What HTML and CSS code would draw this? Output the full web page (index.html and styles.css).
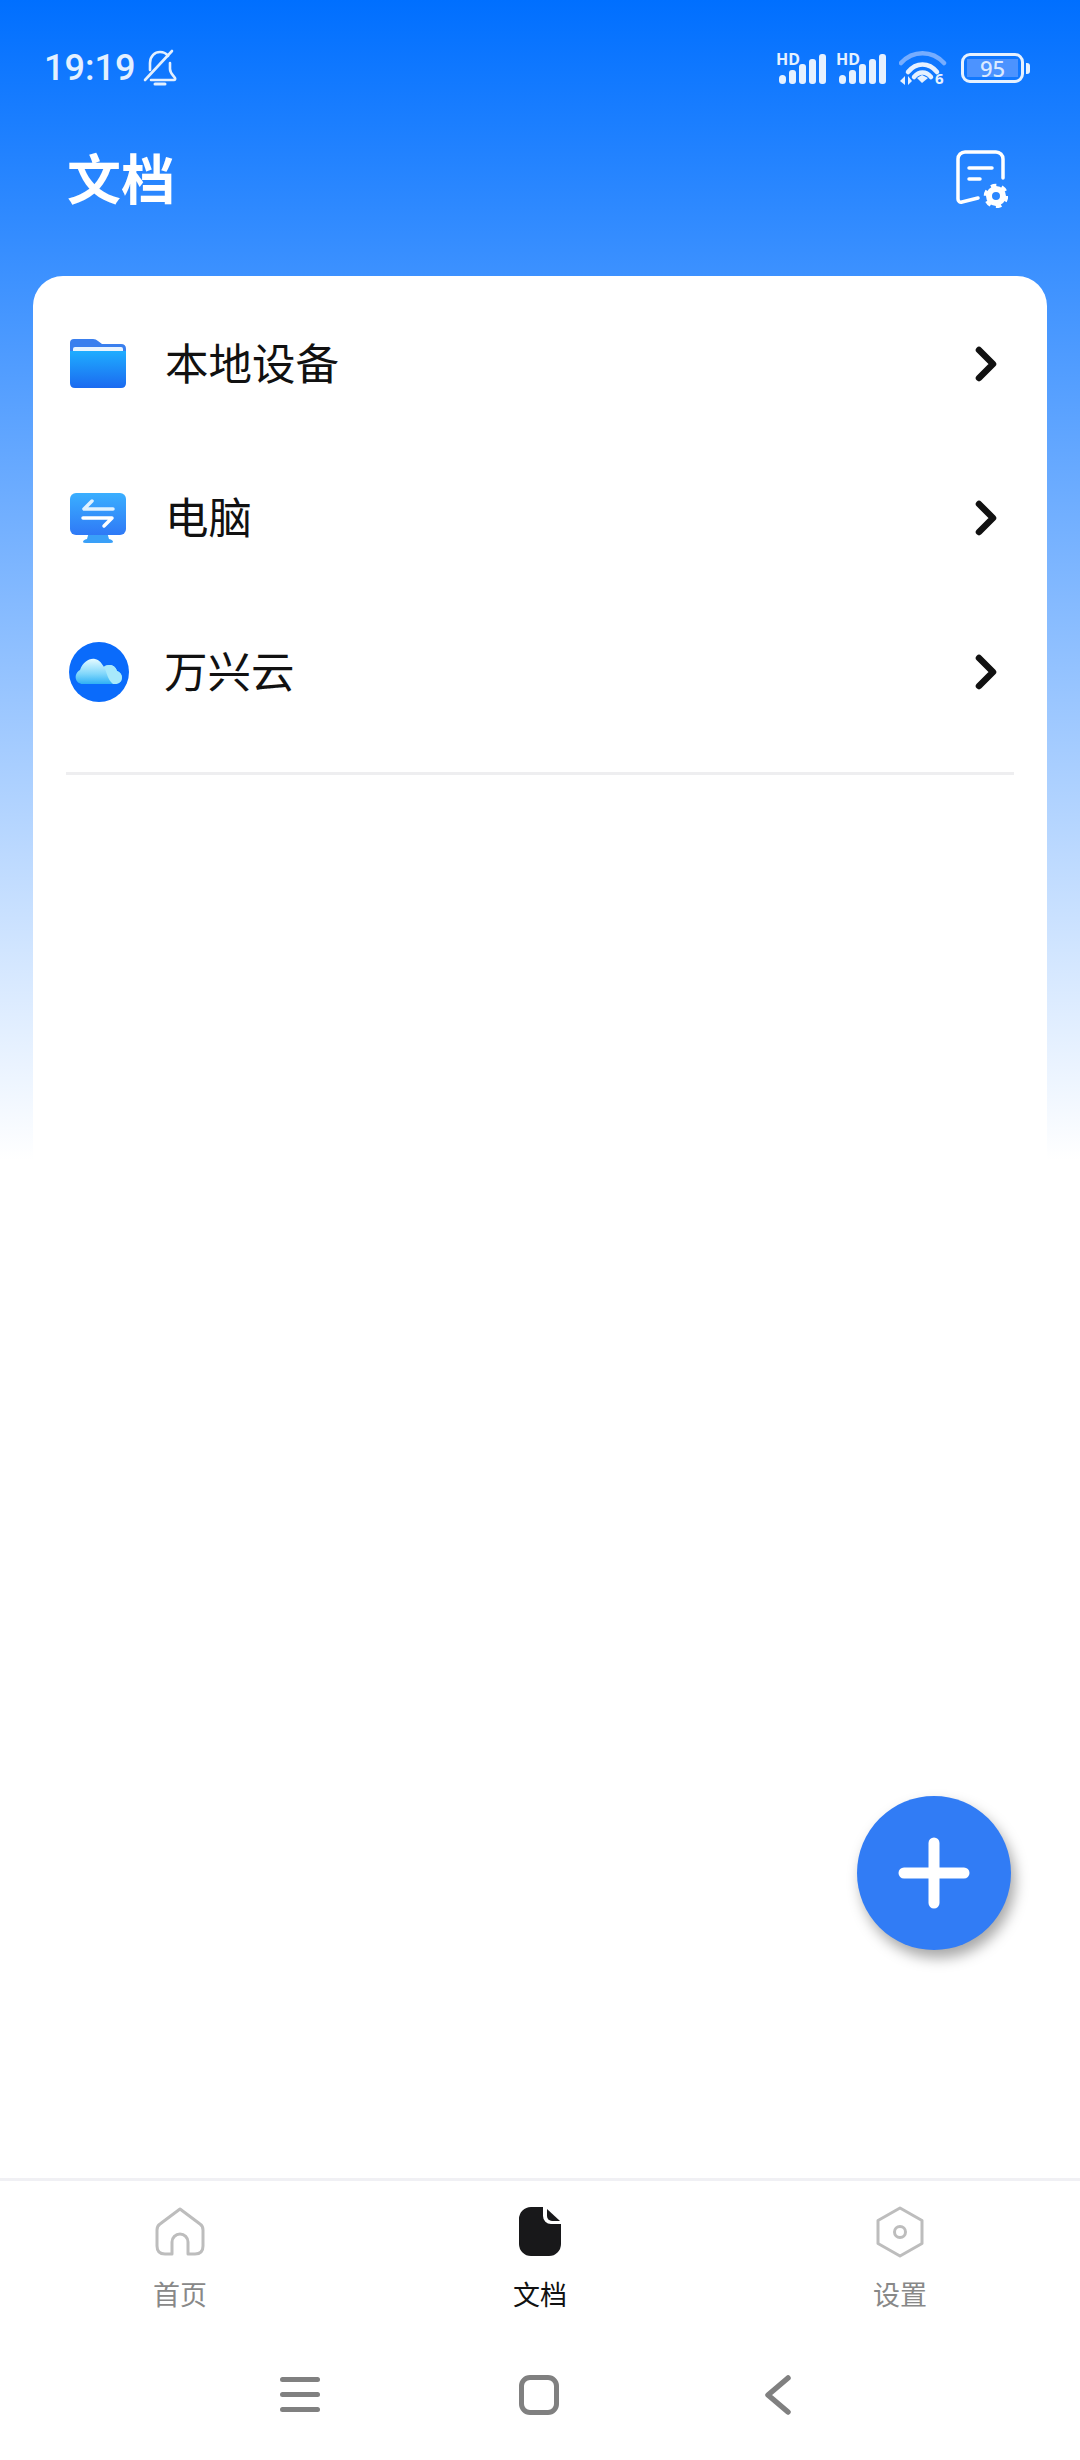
FILE: index.html
```html
<!DOCTYPE html>
<html lang="zh">
<head>
  <title>文档</title>
  <meta name="viewport" content="width=device-width, initial-scale=1.0" />
  <link rel="stylesheet" href="styles.css">
</head>
<body>
  <div class="statusbar">
    <div class="status-left">
      <span class="time">19:19</span>
      <svg class="bell" width="34" height="38" viewBox="0 0 34 38" fill="none" stroke="#e3f0ff" stroke-width="2.6" stroke-linecap="round" stroke-linejoin="round">
        <path d="M7 21 V14 C7 7 12 3 17 3 C20 3 23 4 25 7"/>
        <path d="M27 14 V20 C27 24 30 26 32 29 C32.500 30 32 31 31 31 H8"/>
        <path d="M2 31 L29 2"/>
        <path d="M12 35 H22" stroke-width="3"/>
      </svg>
    </div>
    <div class="status-right">
      <svg class="signal" width="50" height="40" viewBox="0 -8 50 40">
        <text class="hd" x="0" y="13">HD</text>
        <rect x="3" y="23" width="7" height="9" rx="3.500" fill="#e6f1ff"/>
        <rect x="13" y="18" width="7" height="14" rx="3" fill="#e6f1ff"/>
        <rect x="23" y="12" width="7" height="20" rx="3" fill="#e6f1ff"/>
        <rect x="33" y="7" width="7" height="25" rx="3" fill="#e6f1ff"/>
        <rect x="43" y="2" width="7" height="30" rx="3" fill="#e6f1ff"/>
      </svg>
      <svg class="signal" width="50" height="40" viewBox="0 -8 50 40">
        <text class="hd" x="0" y="13">HD</text>
        <rect x="3" y="23" width="7" height="9" rx="3.500" fill="#e6f1ff"/>
        <rect x="13" y="18" width="7" height="14" rx="3" fill="#e6f1ff"/>
        <rect x="23" y="12" width="7" height="20" rx="3" fill="#e6f1ff"/>
        <rect x="33" y="7" width="7" height="25" rx="3" fill="#e6f1ff"/>
        <rect x="43" y="2" width="7" height="30" rx="3" fill="#e6f1ff"/>
      </svg>
      <svg class="wifi" width="48" height="44" viewBox="0 -4 48 44" fill="none" stroke-linecap="round">
        <path d="M2 12 C14 -1 33 -1 45 12" stroke="#76adff" stroke-width="4.500"/>
        <path d="M9 21 C17 11 30 11 38 21" stroke="#e6f1ff" stroke-width="4.500"/>
        <path d="M15 26 C20 20 27 20 32 26" stroke="#e6f1ff" stroke-width="4.500"/>
        <path d="M18 27 L23 24 L29 27 L23 32 Z" fill="#e6f1ff"/>
        <path d="M6 25 V34 L1 30 Z M9 25 V34 L13 30 Z" fill="#e6f1ff"/>
        <text class="wifi-six" x="36" y="33">6</text>
      </svg>
      <div class="battery">
        <div class="battery-body"><span class="battery-level">95</span></div>
        <div class="battery-tip"></div>
      </div>
    </div>
  </div>

  <header class="header">
    <h1 class="title">文档</h1>
    <svg class="header-icon" width="52" height="58" viewBox="0 0 52 58" fill="none" stroke="#fff" stroke-width="3.500" stroke-linecap="round" stroke-linejoin="round">
      <path d="M47 28 V9 A7 7 0 0 0 40 2 H9 A7 7 0 0 0 2 9 V49 A3 3 0 0 0 6 52 L22 48"/>
      <path d="M13 18 H36"/>
      <path d="M13 29 H24"/>
      <circle cx="40" cy="46" r="7" stroke-width="6"/>
      <circle cx="40" cy="46" r="10.500" stroke-width="3.500" stroke-dasharray="5.500 5.500" stroke-linecap="butt"/>
    </svg>
  </header>

  <main class="card">
    <div class="row">
      <svg class="row-icon" width="58" height="52" viewBox="0 0 58 52">
        <defs>
          <linearGradient id="folderFront" x1="0" y1="0" x2="0" y2="1">
            <stop offset="0" stop-color="#1fadff"/>
            <stop offset="1" stop-color="#1b6af0"/>
          </linearGradient>
        </defs>
        <path d="M5 1 H24 Q27 1 29 3 L33 6 H52 Q57 6 57 11 V30 H1 V5 Q1 1 5 1 Z" fill="#3a7fee"/>
        <rect x="4" y="9" width="50" height="6" rx="2" fill="#e8f4ff"/>
        <path d="M1 13 H57 V45 Q57 50 52 50 H6 Q1 50 1 45 Z" fill="url(#folderFront)"/>
      </svg>
      <span class="row-label">本地设备</span>
      <svg class="chevron" width="26" height="38" viewBox="0 0 26 38" fill="none" stroke="#111" stroke-width="6.500" stroke-linecap="round" stroke-linejoin="round">
        <path d="M6 5 L20 19 L6 33"/>
      </svg>
    </div>
    <div class="row">
      <svg class="row-icon" width="58" height="52" viewBox="0 0 58 52">
        <defs>
          <linearGradient id="screen" x1="0" y1="0" x2="0" y2="1">
            <stop offset="0" stop-color="#3aafff"/>
            <stop offset="1" stop-color="#2f79f6"/>
          </linearGradient>
        </defs>
        <path d="M20 40 H38 L40 47 Q44 48 44 50 Q44 51 41 51 H17 Q14 51 14 50 Q14 48 18 47 Z" fill="#3aa0f8"/>
        <rect x="1" y="1" width="56" height="42" rx="6" fill="url(#screen)"/>
        <path d="M23 9 L15 17 H44" fill="none" stroke="#dff1ff" stroke-width="3.500" stroke-linecap="round" stroke-linejoin="round"/>
        <path d="M14 26 H43 L35 34" fill="none" stroke="#fff" stroke-width="3.500" stroke-linecap="round" stroke-linejoin="round"/>
      </svg>
      <span class="row-label">电脑</span>
      <svg class="chevron" width="26" height="38" viewBox="0 0 26 38" fill="none" stroke="#111" stroke-width="6.500" stroke-linecap="round" stroke-linejoin="round">
        <path d="M6 5 L20 19 L6 33"/>
      </svg>
    </div>
    <div class="row">
      <svg class="row-icon" width="60" height="60" viewBox="0 0 60 60">
        <defs>
          <linearGradient id="cloud" x1="0" y1="0" x2="0" y2="1">
            <stop offset="0" stop-color="#e6fbff"/>
            <stop offset="0.6" stop-color="#7fd6fb"/>
            <stop offset="1" stop-color="#2fb0f5"/>
          </linearGradient>
        </defs>
        <circle cx="30" cy="30" r="30" fill="#0a6bfb"/>
        <path d="M14 42 C6 42 4 32 11 28 C14 20 20 16 26 17 C31 18 33 22 35 25 C38 22 46 22 48 29 C55 31 55 42 46 42 Z" fill="url(#cloud)"/>
        <path d="M35 25 C38 30 38 37 44 42 H46 C55 42 55 31 48 29 C46 22 38 22 35 25 Z" fill="#a8e9fb"/>
      </svg>
      <span class="row-label">万兴云</span>
      <svg class="chevron" width="26" height="38" viewBox="0 0 26 38" fill="none" stroke="#111" stroke-width="6.500" stroke-linecap="round" stroke-linejoin="round">
        <path d="M6 5 L20 19 L6 33"/>
      </svg>
    </div>
    <div class="divider"></div>
  </main>

  <button class="fab">
    <svg width="74" height="74" viewBox="0 0 74 74" fill="none" stroke="#fff" stroke-width="11" stroke-linecap="round">
      <path d="M37 7 V67"/>
      <path d="M7 37 H67"/>
    </svg>
  </button>

  <nav class="tabs">
    <div class="tab">
      <svg class="tab-icon" width="50" height="52" viewBox="0 0 50 52" fill="none" stroke="#bdbdbd" stroke-width="3" stroke-linejoin="round">
        <path d="M25 3 L45 18 Q48 20 48 24 V40 Q48 48 40 48 H33 V36 A8 8 0 0 0 17 36 V48 H10 Q2 48 2 40 V24 Q2 20 5 18 Z"/>
      </svg>
      <span class="tab-label">首页</span>
    </div>
    <div class="tab tab-active">
      <svg class="tab-icon" width="42" height="52" viewBox="0 0 42 52" fill="#18181a">
        <path d="M12 1 H24 V10 A8 8 0 0 0 32 18 H42 V38 A12 12 0 0 1 30 50 H12 A12 12 0 0 1 0 38 V13 A12 12 0 0 1 12 1 Z"/>
        <path d="M28 3 L41 15 H33 A5 5 0 0 1 28 10 Z"/>
      </svg>
      <span class="tab-label">文档</span>
    </div>
    <div class="tab">
      <svg class="tab-icon" width="50" height="52" viewBox="0 0 50 52" fill="none" stroke="#bdbdbd" stroke-width="3" stroke-linejoin="round">
        <path d="M25 2 L47 14.500 V37.500 L25 50 L3 37.500 V14.500 Z"/>
        <circle cx="25" cy="26" r="5.500"/>
      </svg>
      <span class="tab-label">设置</span>
    </div>
  </nav>

  <div class="sysnav">
    <svg width="40" height="36" viewBox="0 0 40 36" fill="#808080">
      <rect x="0" y="0" width="40" height="5" rx="2.500"/>
      <rect x="0" y="15" width="40" height="5" rx="2.500"/>
      <rect x="0" y="30" width="40" height="5" rx="2.500"/>
    </svg>
    <div class="sys-home"></div>
    <svg width="40" height="42" viewBox="0 0 40 42" fill="none" stroke="#808080" stroke-width="5.500" stroke-linecap="round" stroke-linejoin="round">
      <path d="M30 4 L10 21 L30 38"/>
    </svg>
  </div>
</body>
</html>
```

FILE: styles.css
```css
* {
  box-sizing: border-box;
}
body {
  position: relative;
  display: flex;
  flex-direction: column;
  width: 1080px;
  height: 2460px;
  margin: 0;
  overflow: hidden;
  font-family: "Noto Sans CJK SC", "Noto Sans", sans-serif;
  color: #111;
  background: linear-gradient(180deg, #006fff 0, #fff 1160px);
}
.statusbar {
  display: flex;
  justify-content: space-between;
  align-items: center;
  height: 136px;
  padding: 0 50px 0 44px;
}
.status-left {
  display: flex;
  align-items: center;
  gap: 8px;
}
.time {
  font-family: Roboto, sans-serif;
  font-size: 36px;
  font-weight: 500;
  line-height: 40px;
  color: #e3f0ff;
}
.status-right {
  display: flex;
  align-items: center;
  gap: 10px;
}
.signal {
  margin-top: -8px;
}
.hd {
  font-family: "Noto Sans", sans-serif;
  font-size: 16px;
  font-weight: 700;
  fill: #e6f1ff;
}
.wifi {
  margin: -4px 0 -6px 3px;
}
.wifi-six {
  font-family: "Noto Sans", sans-serif;
  font-size: 15px;
  font-weight: 700;
  fill: #e6f1ff;
}
.battery {
  display: flex;
  align-items: center;
  gap: 2px;
  margin-left: 4px;
}
.battery-body {
  display: flex;
  width: 63px;
  height: 30px;
  padding: 3px;
  border: 3px solid #e6f1ff;
  border-radius: 9px;
}
.battery-level {
  flex: 1;
  font-family: "Noto Sans", sans-serif;
  font-size: 22px;
  font-weight: 500;
  line-height: 18px;
  text-align: center;
  color: #dbeaff;
  background-color: #4c93ff;
}
.battery-tip {
  width: 4px;
  height: 11px;
  border-radius: 0 3px 3px 0;
  background-color: #e6f1ff;
}
.header {
  display: flex;
  justify-content: space-between;
  align-items: center;
  height: 90px;
  padding: 0 72px 0 67px;
}
.header-icon {
  margin-bottom: 4px;
}
.title {
  margin: 0 0 8px;
  font-size: 54px;
  font-weight: 700;
  line-height: 82px;
  color: #fff;
}
.card {
  flex: none;
  height: 884px;
  margin: 50px 33px 0;
  padding-top: 11px;
  border-radius: 30px 30px 0 0;
  background-color: #fff;
}
.row {
  display: flex;
  align-items: center;
  height: 154px;
  padding: 0 48px 0 36px;
}
.row-icon {
  flex: none;
}
.row-label {
  flex: 1;
  margin: 0 0 5px 38px;
  font-size: 43.500px;
  line-height: 60px;
}
.row:nth-of-type(3) .row-label {
  margin-left: 35px;
}
.divider {
  height: 3px;
  margin: 23px 33px 0;
  background-color: #eeeef0;
}
.fab {
  position: absolute;
  right: 69px;
  bottom: 510px;
  display: flex;
  justify-content: center;
  align-items: center;
  width: 154px;
  height: 154px;
  padding: 0;
  border: none;
  border-radius: 50%;
  background-color: #317cf5;
  box-shadow: 4px 8px 14px rgba(0, 0, 0, 0.35);
}
.tabs {
  display: grid;
  grid-template-columns: repeat(3, 1fr);
  height: 152px;
  margin-top: auto;
  padding-top: 25px;
  border-top: 3px solid #f0f0f4;
}
.tab {
  display: flex;
  flex-direction: column;
  align-items: center;
  gap: 18px;
}
.tab-label {
  font-size: 27px;
  line-height: 36px;
  color: #888;
}
.tab-active .tab-label {
  color: #111;
}
.sysnav {
  display: flex;
  justify-content: center;
  align-items: center;
  gap: 199px;
  height: 130px;
  padding-right: 2px;
}
.sys-home {
  width: 40px;
  height: 40px;
  border: 5px solid #808080;
  border-radius: 11px;
}
```
